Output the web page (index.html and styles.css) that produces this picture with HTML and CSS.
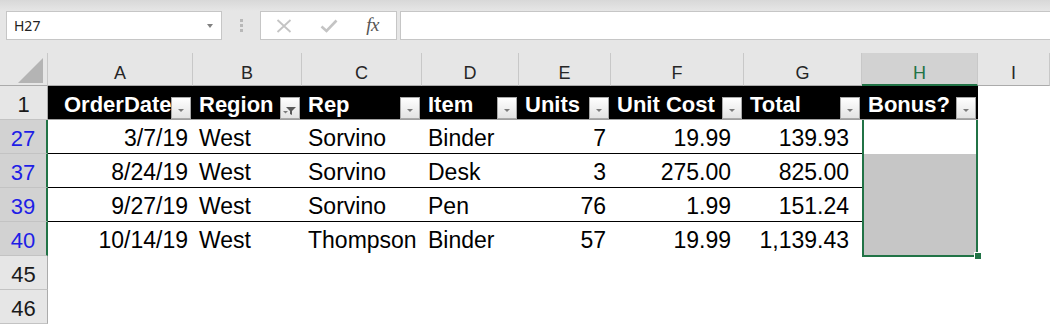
FILE: index.html
```html
<!DOCTYPE html>
<html>
<head>
<meta charset="utf-8">
<link rel="stylesheet" href="styles.css">
</head>
<body>
<div class="ribbon">
  <div class="topstrip"></div>
  <div class="fbar">
    <div class="namebox"><span>H27</span><span class="nb-arrow"></span></div>
    <div class="dots"><i></i><i></i><i></i></div>
    <div class="fbtns">
      <svg width="16" height="14" viewBox="0 0 16 14"><path d="M1.5 1 L14.5 13 M14.5 1 L1.5 13" stroke="#c4c4c4" stroke-width="1.8" fill="none"/></svg>
      <svg width="18" height="14" viewBox="0 0 18 14"><path d="M1.5 7.5 L6.5 12 L16.5 1.5" stroke="#c4c4c4" stroke-width="2.6" fill="none"/></svg>
      <span class="fx">fx</span>
    </div>
    <div class="finput"></div>
  </div>
</div>
<div class="sheet">
  <div class="corner"><svg width="47" height="32" viewBox="0 0 47 32"><polygon points="18,30 43,30 43,5" fill="#b4b4b4"/></svg></div>
  <div class="ch">A</div><div class="ch">B</div><div class="ch">C</div><div class="ch">D</div><div class="ch">E</div><div class="ch">F</div><div class="ch">G</div><div class="ch chsel">H</div><div class="ch">I</div>

  <div class="rh">1</div>
  <div class="th th-first"><span>OrderDate</span><b class="fb"><svg width="18" height="20" viewBox="0 0 18 20"><polygon points="6,11 12,11 9,14" fill="#7c7c7c"/></svg></b></div>
  <div class="th"><span>Region</span><b class="fb"><svg width="18" height="20" viewBox="0 0 18 20"><polygon points="5,9 15,9 11,13 11,17 9,16 9,13" fill="#5a5a5a"/><polygon points="2,13 7,13 4.5,15.5" fill="#7c7c7c"/></svg></b></div>
  <div class="th"><span>Rep</span><b class="fb"><svg width="18" height="20" viewBox="0 0 18 20"><polygon points="6,11 12,11 9,14" fill="#7c7c7c"/></svg></b></div>
  <div class="th"><span>Item</span><b class="fb"><svg width="18" height="20" viewBox="0 0 18 20"><polygon points="6,11 12,11 9,14" fill="#7c7c7c"/></svg></b></div>
  <div class="th"><span>Units</span><b class="fb"><svg width="18" height="20" viewBox="0 0 18 20"><polygon points="6,11 12,11 9,14" fill="#7c7c7c"/></svg></b></div>
  <div class="th"><span>Unit Cost</span><b class="fb"><svg width="18" height="20" viewBox="0 0 18 20"><polygon points="6,11 12,11 9,14" fill="#7c7c7c"/></svg></b></div>
  <div class="th"><span>Total</span><b class="fb"><svg width="18" height="20" viewBox="0 0 18 20"><polygon points="6,11 12,11 9,14" fill="#7c7c7c"/></svg></b></div>
  <div class="th"><span>Bonus?</span><b class="fb"><svg width="18" height="20" viewBox="0 0 18 20"><polygon points="6,11 12,11 9,14" fill="#7c7c7c"/></svg></b></div>
  <div class="c c-hdrrest"></div>

  <div class="rh rsel">27</div>
  <div class="c num line">3/7/19</div><div class="c line">West</div><div class="c line">Sorvino</div><div class="c line">Binder</div><div class="c num line">7</div><div class="c num wide line">19.99</div><div class="c num wide line">139.93</div><div class="c"></div><div class="c"></div>

  <div class="rh rsel">37</div>
  <div class="c num line">8/24/19</div><div class="c line">West</div><div class="c line">Sorvino</div><div class="c line">Desk</div><div class="c num line">3</div><div class="c num wide line">275.00</div><div class="c num wide line">825.00</div><div class="c hsel"></div><div class="c"></div>

  <div class="rh rsel">39</div>
  <div class="c num line">9/27/19</div><div class="c line">West</div><div class="c line">Sorvino</div><div class="c line">Pen</div><div class="c num line">76</div><div class="c num wide line">1.99</div><div class="c num wide line">151.24</div><div class="c hsel"></div><div class="c"></div>

  <div class="rh rsel">40</div>
  <div class="c num">10/14/19</div><div class="c">West</div><div class="c">Thompson</div><div class="c">Binder</div><div class="c num">57</div><div class="c num wide">19.99</div><div class="c num wide">1,139.43</div><div class="c hsel"></div><div class="c"></div>

  <div class="rh">45</div>
  <div class="c"></div><div class="c"></div><div class="c"></div><div class="c"></div><div class="c"></div><div class="c"></div><div class="c"></div><div class="c"></div><div class="c"></div>

  <div class="rh">46</div>
  <div class="c"></div><div class="c"></div><div class="c"></div><div class="c"></div><div class="c"></div><div class="c"></div><div class="c"></div><div class="c"></div><div class="c"></div>

  <div class="selection"></div>
  <div class="fillhandle"></div>
</div>
</body>
</html>
```

FILE: styles.css
```css
html, body {
  margin: 0;
  padding: 0;
}
body {
  width: 1050px;
  height: 325px;
  overflow: hidden;
  background: #ffffff;
  font-family: "Liberation Sans", Arial, sans-serif;
}
.ribbon {
  background: #e6e6e6;
  padding-bottom: 13px;
}
.topstrip {
  height: 11px;
  background: linear-gradient(#d8d8d8, #e6e6e6);
}
.fbar {
  display: flex;
  height: 29px;
  padding-left: 6px;
}
.namebox {
  width: 216px;
  box-sizing: border-box;
  border: 1px solid #c6c6c6;
  background: #fff;
  display: flex;
  align-items: center;
  justify-content: space-between;
  padding: 0 8px 0 7px;
  font-family: "Noto Sans", "Open Sans", sans-serif;
  font-size: 14px;
  color: #222;
}
.nb-arrow {
  width: 0;
  height: 0;
  border-left: 3.5px solid transparent;
  border-right: 3.5px solid transparent;
  border-top: 4px solid #808080;
  margin-top: 1px;
}
.dots {
  width: 38px;
  display: flex;
  flex-direction: column;
  align-items: center;
  justify-content: center;
  gap: 2px;
}
.dots i {
  display: block;
  width: 3px;
  height: 3px;
  background: #b8b8b8;
}
.fbtns {
  width: 137px;
  box-sizing: border-box;
  border: 1px solid #c6c6c6;
  background: #fff;
  display: grid;
  grid-template-columns: repeat(3, 45px);
  align-items: center;
  justify-items: center;
}
.fx {
  font-family: "Liberation Serif", "DejaVu Serif", serif;
  font-style: italic;
  font-size: 19px;
  color: #555;
  letter-spacing: -0.5px;
  margin-top: -2px;
  margin-left: -2px;
}
.finput {
  flex: 1;
  margin-left: 3px;
  margin-right: -2px;
  border: 1px solid #c6c6c6;
  background: #fff;
}

/* sheet */
.sheet {
  position: relative;
  display: grid;
  grid-template-columns: 48px 145px 109px 120px 97px 92px 133px 118px 116px 72px;
  grid-template-rows: 33px repeat(7, 34px);
}
.corner {
  background: #e6e6e6;
  border-right: 1px solid #c8c8c8;
  border-bottom: 1px solid #ababab;
  box-sizing: border-box;
  overflow: hidden;
}
.corner svg {
  display: block;
}
.ch {
  background: #e6e6e6;
  border-right: 1px solid #c8c8c8;
  border-bottom: 1px solid #ababab;
  box-sizing: border-box;
  text-align: center;
  font-size: 18px;
  line-height: 18px;
  padding-top: 11px;
  color: #262626;
}
.ch.chsel {
  background: #d2d2d2;
  color: #217346;
  border-bottom: 2px solid #217346;
}
.rh {
  background: #e6e6e6;
  border-right: 1px solid #ababab;
  border-bottom: 1px solid #c3c3c3;
  box-sizing: border-box;
  text-align: center;
  font-size: 22px;
  line-height: 22px;
  padding-top: 8px;
  color: #1a1a1a;
}
.rh.rsel {
  background: #d2d2d2;
  color: #1e1ee6;
  border-right: 2px solid #217346;
}
.th {
  background: #000;
  color: #fff;
  font-weight: bold;
  font-size: 22px;
  display: flex;
  align-items: flex-end;
  padding-left: 6px;
  border-bottom: 1px solid #a0a0a0;
  box-sizing: border-box;
  min-width: 0;
}
.th span {
  flex: 1;
  min-width: 0;
  white-space: nowrap;
  line-height: 22px;
  padding-bottom: 3px;
}
.th.th-first {
  padding-left: 16px;
}
.fb {
  flex: none;
  width: 20px;
  height: 22px;
  margin-right: 2px;
  box-sizing: border-box;
  border: 1px solid #a9a9a9;
  background: linear-gradient(#ffffff, #e3e3e3);
  display: flex;
  align-items: center;
  justify-content: center;
}
.fb svg {
  display: block;
}
.c-hdrrest {
  border-bottom: 1px solid #a0a0a0;
}
.c {
  box-sizing: border-box;
  border-bottom: 1px solid transparent;
  font-size: 23px;
  line-height: 23px;
  padding: 7px 6px 0 6px;
  white-space: nowrap;
  color: #000;
  background: #fff;
}
.c.num {
  text-align: right;
  padding-right: 5px;
}
.c.num.wide {
  padding-right: 13px;
}
.c.line {
  border-bottom-color: #000;
}
.c.hsel {
  background: #c6c6c6;
}
.selection {
  position: absolute;
  left: 862px;
  top: 67px;
  width: 116px;
  height: 137px;
  box-sizing: border-box;
  border: 2px solid #217346;
  border-top: none;
  pointer-events: none;
}
.fillhandle {
  position: absolute;
  left: 974px;
  top: 199px;
  width: 7px;
  height: 7px;
  box-sizing: border-box;
  background: #217346;
  border-left: 1px solid #fff;
  border-top: 1px solid #fff;
}
```
